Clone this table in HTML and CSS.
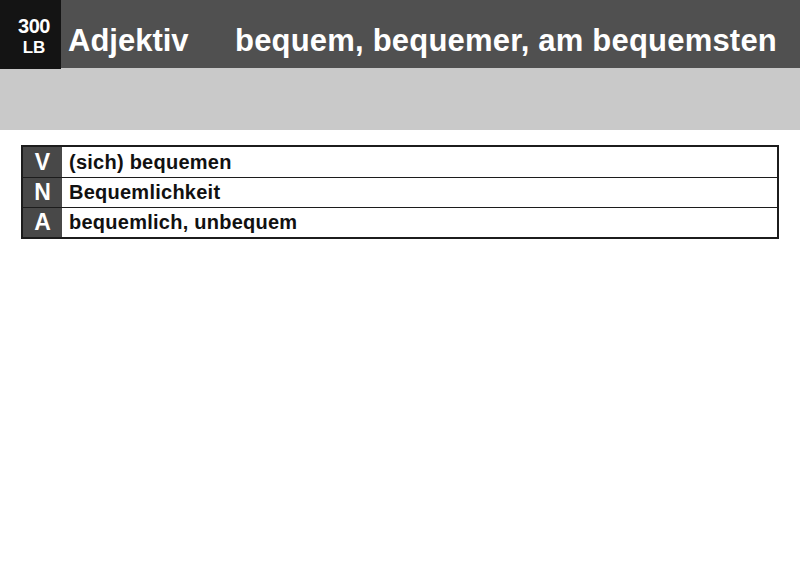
FILE: index.html
```html
<!DOCTYPE html>
<html lang="de">
<head>
<meta charset="utf-8">
<link rel="stylesheet" href="styles.css">
</head>
<body>
<header class="top">
  <div class="badge"><span class="num">300</span><span class="lb">LB</span></div>
  <div class="bar">
    <span class="kind">Adjektiv</span>
    <span class="forms">bequem, bequemer, am bequemsten</span>
  </div>
</header>
<div class="band"></div>
<main class="content">
  <div class="table">
    <div class="row"><div class="key">V</div><div class="val">(sich) bequemen</div></div>
    <div class="row"><div class="key">N</div><div class="val">Bequemlichkeit</div></div>
    <div class="row"><div class="key">A</div><div class="val">bequemlich, unbequem</div></div>
  </div>
</main>
</body>
</html>
```
FILE: styles.css
```css
* { box-sizing: border-box; }
html, body { margin: 0; padding: 0; background: #fff; }
body { width: 800px; height: 569px; overflow: hidden; font-family: "Liberation Sans", Arial, sans-serif; }

.top { display: flex; height: 68px; background: #505050; }
.badge {
  width: 61px; height: 69px; background: #141414; color: #fff;
  display: flex; flex-direction: column; align-items: center; justify-content: center;
  font-weight: 700; line-height: 1; padding: 2px 0 0 7px;
}
.badge .num { font-size: 20px; letter-spacing: -0.5px; }
.badge .lb { font-size: 17px; margin-top: 3px; }
.bar { flex: 1; display: flex; align-items: center; padding-left: 7px; padding-top: 14px; color: #fff; font-weight: 700; font-size: 31px; }
.kind { width: 167px; }
.forms { letter-spacing: 0.2px; }

.band { height: 62px; background: #c9c9c9; }

.content { padding: 15px 21px 0 21px; }
.table { border: 2px solid #1c1c1c; width: 758px; }
.row { display: flex; height: 30px; border-top: 1px solid #1c1c1c; }
.row:first-child { border-top: none; }
.key {
  width: 39px; background: #484848; color: #fff; font-weight: 700; font-size: 23px;
  display: flex; align-items: center; justify-content: center; line-height: 1;
}
.val { flex: 1; display: flex; align-items: center; padding-left: 7px; font-size: 20px; font-weight: 700; color: #111; letter-spacing: 0.25px; }
```
